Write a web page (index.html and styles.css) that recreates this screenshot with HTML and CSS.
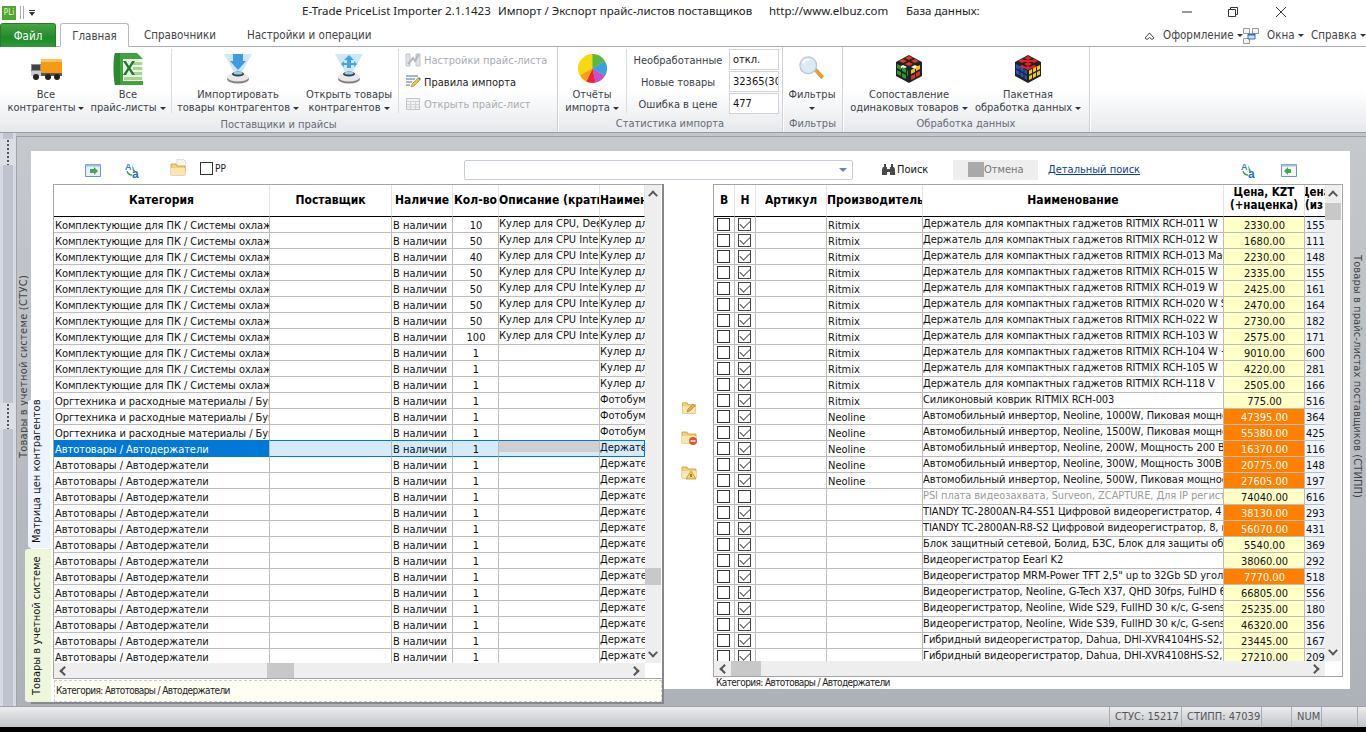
FILE: index.html
```html
<!DOCTYPE html>
<html lang="ru">
<head>
<meta charset="utf-8">
<title>E-Trade PriceList Importer</title>
<link rel="stylesheet" href="styles.css">
</head>
<body>
<svg class="defs" width="0" height="0">
  <symbol id="cube1" viewBox="0 0 28 30">
    <path d="M14 1 27 8v14L14 29 1 22V8z" fill="#222"/>
    <path d="M14 2l4 2-4 2-4-2zM8 5l4 2-4 2-4-2zM20 5l4 2-4 2-4-2zM14 8l4 2-4 2-4-2z" fill="#e23a2a"/>
    <path d="M8 11l4 2-4 2-4-2zM20 11l4 2-4 2-4-2z" fill="#f2f2f2"/>
    <path d="M2 10l4 2v4l-4-2zM7 13l4 2v4l-4-2zM2 16l4 2v4l-4-2zM7 19l4 2v4l-4-2zM12 16l1 1v5l-1-1z" fill="#2b9a35"/>
    <path d="M16 16l4-2v4l-4 2zM21 13l4-2v4l-4 2z" fill="#f0c020"/>
    <path d="M16 22l4-2v4l-4 2zM21 19l4-2v4l-4 2z" fill="#d73426"/>
  </symbol>
  <symbol id="cube2" viewBox="0 0 28 30">
    <path d="M14 1 27 8v14L14 29 1 22V8z" fill="#222"/>
    <path d="M14 2l4 2-4 2-4-2zM8 5l4 2-4 2-4-2zM20 5l4 2-4 2-4-2zM14 8l4 2-4 2-4-2zM8 11l4 2-4 2-4-2zM20 11l4 2-4 2-4-2zM14 5l4 2-4 2-4-2zM14 12l4 2-4 2-4-2z" fill="#e3222a"/>
    <path d="M2 10l3.500 2v4L2 14zM6.500 12.500l3 2v4l-3-2zM10.500 15l2.500 1.500v4L10.500 19zM2 15.500l3.500 2v4L2 19.500zM6.500 18l3 2v4l-3-2zM10.500 20.500l2.500 1.500v4l-2.500-1.500z" fill="#1c55c8"/>
    <path d="M15 16.500l3-1.500v4l-3 1.500zM19 14.500l3-1.500v4l-3 1.500zM23 12.500l3-1.500v4l-3 1.500zM15 22l3-1.500v4L15 26zM19 20l3-1.500v4L19 24zM23 18l3-1.500v4L23 22z" fill="#f3c914"/>
  </symbol>
  <symbol id="drive" viewBox="0 0 30 30">
    <path d="M1 0h28L19 18h-8z" fill="#cfe8f8"/>
    <ellipse cx="15" cy="25" rx="11" ry="4.500" fill="#7f7f7f"/>
    <ellipse cx="15" cy="23" rx="11" ry="4.500" fill="#e8e8e8"/>
    <ellipse cx="15" cy="20" rx="6" ry="2.500" fill="#3d3d3d"/>
    <ellipse cx="15" cy="19" rx="4.500" ry="1.600" fill="#8fd2f5"/>
  </symbol>
  <symbol id="az" viewBox="0 0 16 16">
    <text x="0" y="8" class="az-a">A</text>
    <path d="M2 9c1 3 3 4 5 4" fill="none" stroke="#3aa655" stroke-width="1.500"/>
    <path d="M7 3l3 6-2 1z" fill="#4aa564"/>
    <text x="7" y="16" class="az-b">a</text>
  </symbol>
  <symbol id="folder" viewBox="0 0 16 16">
    <path d="M1 3h5l1 2h8v9H1z" fill="#f3cf7d" stroke="#c8983f" stroke-width=".8"/>
    <path d="M1 7h14v7H1z" fill="#fbe7ae"/>
  </symbol>
</svg>

<header class="titlebar">
  <span class="pli">PLi</span>
  <span class="tsep"></span><span class="tsep"></span>
  <span class="qa"></span>
  <span class="title"><span class="tt1">E-Trade PriceList Importer 2.1.1423</span><span class="tt2">Импорт / Экспорт прайс-листов поставщиков</span><span class="tt3">http://www.elbuz.com</span><span>База данных:</span></span>
  <span class="winbtn"><svg width="12" height="12" viewBox="0 0 12 12"><path d="M1 6h10" stroke="#333"/></svg></span>
  <span class="winbtn"><svg width="12" height="12" viewBox="0 0 12 12"><path d="M1.500 3.500h7v7h-7zM3.500 3.500v-2h7v7h-2" fill="none" stroke="#333"/></svg></span>
  <span class="winbtn last"><svg width="12" height="12" viewBox="0 0 12 12"><path d="M1 1l10 10M11 1 1 11" stroke="#333"/></svg></span>
</header>

<nav class="tabs">
  <span class="tab-file">Файл</span>
  <span class="tab active">Главная</span>
  <span class="tab">Справочники</span>
  <span class="tab">Настройки и операции</span>
  <span class="tabs-right">
    <svg class="collapse" width="13" height="10" viewBox="0 0 13 10"><path d="M2 7l4.500-5L11 7l-2 1.500-2.500-2-2.500 2z" fill="none" stroke="#444"/></svg>
    <span class="menu me1">Оформление<i class="car"></i></span>
    <svg class="winico" width="16" height="16" viewBox="0 0 16 16"><path d="M.5 .5h6v5h-6zM9.500 .5h6v5h-6zM.5 10.500h6v5h-6z" fill="#f4f4f4" stroke="#999"/><path d="M5 6h7v5H5z" fill="#cfe3f6" stroke="#2c6fc0"/><path d="M5 6h7v1.500H5z" fill="#2c6fc0"/></svg>
    <span class="menu me2">Окна<i class="car"></i></span>
    <span class="menu me3">Справка<i class="car"></i></span>
  </span>
</nav>

<section class="ribbon">
  <div class="group g-suppliers">
    <div class="gbody">
      <div class="rb w84">
        <span class="ric"><svg width="34" height="26" viewBox="0 0 34 26"><path d="M12 3h21v14H12z" fill="#f59a12"/><path d="M12 3h21v3H12z" fill="#fdc35a"/><path d="M2 8h10v12H2z" fill="#8a8d90"/><path d="M3 9h8v5H3z" fill="#3f4347"/><path d="M2 15h10v5H2z" fill="#c9cccf"/><path d="M12 17h21v3H12z" fill="#55585b"/><circle cx="7" cy="21" r="3" fill="#222"/><circle cx="19" cy="21" r="3" fill="#222"/><circle cx="28" cy="21" r="3" fill="#222"/></svg></span>
        <span>Все</span><span>контрагенты<i class="car"></i></span>
      </div>
      <div class="rb w80">
        <span class="ric"><svg width="32" height="34" viewBox="0 0 32 34"><path d="M3 1h22l6 6v26H3z" fill="#3fa43f"/><path d="M3 1c-2 3-2 26 0 32h5V1z" fill="#2e8a2e"/><path d="M11 7h20v22H11z" fill="#eef6e6"/><path d="M21 10h9v3h-9zM21 15h9v3h-9zM21 20h9v3h-9zM12 25h18v3H12z" fill="#a5d58e"/><path d="M11 9l3-0 3 5 3-5h3l-4.500 7L23 23h-3l-3-5-3 5h-3l4.500-7z" fill="#1f7a2b"/></svg></span>
        <span>Все</span><span>прайс-листы<i class="car"></i></span>
      </div>
      <span class="isep s1"></span>
      <div class="rb w132">
        <span class="ric"><svg width="30" height="30" viewBox="0 0 30 30"><use href="#drive"/><path d="M10 0h10v7h3l-8 9-8-9h3z" fill="#3f9be0"/></svg></span>
        <span>Импортировать</span><span>товары контрагентов<i class="car"></i></span>
      </div>
      <div class="rb w90">
        <span class="ric"><svg width="30" height="30" viewBox="0 0 30 30"><use href="#drive"/><path d="M15 1l5 5h-3v3h3v-2l3 3-3 3v-2h-3v3h-4v-3H10v2l-3-3 3-3v2h3V6h-3z" fill="#45a5e0"/></svg></span>
        <span>Открыть товары</span><span>контрагентов<i class="car"></i></span>
      </div>
      <span class="isep s2"></span>
      <div class="smalls">
        <div class="sb dis"><svg width="16" height="16" viewBox="0 0 16 16"><path d="M1 2h4v12H1zM11 2h4v12h-4z" fill="#e1e4e8" stroke="#c3c7cc"/><path d="M3 12 8 6l2 3 4-7" fill="none" stroke="#b5b8bd" stroke-width="2"/></svg>Настройки прайс-листа</div>
        <div class="sb"><svg width="16" height="16" viewBox="0 0 16 16"><path d="M1 2h12M1 5h9M1 8h6M1 11h4" stroke="#3c70b0"/><path d="M6 13l1-3 6-6 2 2-6 6z" fill="#f0c13c" stroke="#a8802a" stroke-width=".6"/><path d="M13 4l2 2 1-1-2-2z" fill="#4a86c8"/></svg>Правила импорта</div>
        <div class="sb dis"><svg width="16" height="16" viewBox="0 0 16 16"><path d="M1.500 2.500h13v11h-13z" fill="#f2f3f5" stroke="#c0c4c9"/><path d="M1.500 5.500h13M1.500 8.500h13M1.500 11h13M5.500 5.500v8M10.500 5.500v8" stroke="#cfd2d6"/></svg>Открыть прайс-лист</div>
      </div>
    </div>
    <div class="gtitle">Поставщики и прайсы</div>
  </div>

  <div class="group g-stats">
    <div class="gbody">
      <div class="rb w68">
        <span class="ric"><svg width="29" height="29" viewBox="0 0 28 28"><circle cx="14" cy="14" r="14" fill="#f6d90e"/><path d="M14 14V0a14 14 0 0 1 12 7z" fill="#57b848"/><path d="M14 14l12-7a14 14 0 0 1 0 14z" fill="#3aa0e4"/><path d="M14 14l12 7a14 14 0 0 1-9 6.600z" fill="#c74fd8"/><path d="M14 14l3 13.600a14 14 0 0 1-9-1z" fill="#e8244a"/><path d="M14 14 8 26.600a14 14 0 0 1-6-6z" fill="#f7a10f"/></svg></span>
        <span>Отчёты</span><span>импорта<i class="car"></i></span>
      </div>
      <span class="isep s3"></span>
      <div class="stat">
        <div class="statrow"><label>Необработанные</label><span class="inp">откл.</span></div>
        <div class="statrow"><label>Новые товары</label><span class="inp">32365(30</span></div>
        <div class="statrow"><label>Ошибка в цене</label><span class="inp">477</span></div>
      </div>
    </div>
    <div class="gtitle">Статистика импорта</div>
  </div>

  <div class="group g-filter">
    <div class="gbody">
      <div class="rb w58">
        <span class="ric"><svg width="26" height="25" viewBox="0 0 28 27"><path d="M16 16l3-3 8 9-3 3z" fill="#ec9a35"/><circle cx="10" cy="10" r="9" fill="#d6edf9" stroke="#bcc6cc" stroke-width="1.500"/><path d="M4 8a6 6 0 0 1 7-4" fill="none" stroke="#fff" stroke-width="2"/></svg></span>
        <span>Фильтры</span><span><i class="car solo"></i></span>
      </div>
    </div>
    <div class="gtitle">Фильтры</div>
  </div>

  <div class="group g-proc">
    <div class="gbody">
      <div class="rb w126">
        <span class="ric"><svg width="28" height="30"><use href="#cube1"/></svg></span>
        <span>Сопоставление</span><span>одинаковых товаров<i class="car"></i></span>
      </div>
      <div class="rb w112">
        <span class="ric"><svg width="28" height="30"><use href="#cube2"/></svg></span>
        <span>Пакетная</span><span>обработка данных<i class="car"></i></span>
      </div>
    </div>
    <div class="gtitle">Обработка данных</div>
  </div>
  <div class="ribbon-rest"></div>
</section>

<main class="main">
  <aside class="strip"><span class="grip"></span><span class="grip g2"></span></aside>
  <div class="content">
    <div class="vlabel left"><span>Товары в учетной системе (СТУС)</span></div>
    <div class="panel">
      <div class="toolbar">
        <div class="tl">
          <svg class="t1" width="16" height="16" viewBox="0 0 16 16"><path d="M.5 2.500h15v12H.5z" fill="#e6f0fa" stroke="#6d95c2"/><path d="M.5 2.500h15v2H.5z" fill="#9dc0e4"/><path d="M5 7h4V5l4 4-4 4v-2H5z" fill="#49a54d"/></svg>
          <svg class="t2" width="16" height="16"><use href="#az"/></svg>
          <svg class="t3" width="16" height="18" viewBox="0 0 16 18"><path d="M7 0h6l3 3v9H7z" fill="#f4f4f4" stroke="#c9c9c9" stroke-width=".7"/><use href="#folder" y="2" width="16" height="16"/></svg>
          <i class="cb pp"></i><span class="pptext">PP</span>
        </div>
        <div class="combo"><i class="combo-arrow"></i></div>
        <div class="search"><svg width="13" height="11" viewBox="0 0 13 11"><path d="M1 3h4v8H0V5zM8 3h4l1 2v6H8zM5 5h3v3H5zM2 0h2v3H2zM9 0h2v3H9z" fill="#4a4a4a"/></svg>Поиск</div>
        <div class="cancel"><i class="gray-sq"></i>Отмена</div>
        <a class="detail">Детальный поиск</a>
        <div class="tr">
          <svg width="16" height="16"><use href="#az"/></svg>
          <svg width="16" height="16" viewBox="0 0 16 16"><path d="M.5 2.500h15v12H.5z" fill="#f4f8fc" stroke="#6d95c2"/><path d="M.5 2.500h15v2H.5z" fill="#9dc0e4"/><path d="M10 7H7V5L3 9l4 4v-2h3z" fill="#49a54d"/></svg>
        </div>
      </div>

      <div class="split">
        <section class="lpane">
          <div class="vtab vt1">Матрица цен контрагентов</div>
          <div class="vtab vt2">Товары в учетной системе</div>
          <div class="grid lgrid">
            <div class="gridtop">
              <div class="tw">
                <table class="tb ltb">
                  <colgroup><col class="c216"><col class="c122"><col class="c61"><col class="c46"><col class="c101"><col class="c45"></colgroup>
                  <thead><tr><th>Категория</th><th>Поставщик</th><th>Наличие</th><th>Кол-во</th><th class="lft">Описание (краткое)</th><th class="lft">Наименование</th></tr></thead>
                  <tbody>
<tr><td>Комплектующие для ПК / Системы охлаждения</td><td></td><td>В наличии</td><td>10</td><td>Кулер для CPU, Deepcool</td><td>Кулер для CPU</td></tr>
<tr><td>Комплектующие для ПК / Системы охлаждения</td><td></td><td>В наличии</td><td>50</td><td>Кулер для CPU Intel, AMD</td><td>Кулер для CPU</td></tr>
<tr><td>Комплектующие для ПК / Системы охлаждения</td><td></td><td>В наличии</td><td>40</td><td>Кулер для CPU Intel, AMD</td><td>Кулер для CPU</td></tr>
<tr><td>Комплектующие для ПК / Системы охлаждения</td><td></td><td>В наличии</td><td>50</td><td>Кулер для CPU Intel, AMD</td><td>Кулер для CPU</td></tr>
<tr><td>Комплектующие для ПК / Системы охлаждения</td><td></td><td>В наличии</td><td>50</td><td>Кулер для CPU Intel, AMD</td><td>Кулер для CPU</td></tr>
<tr><td>Комплектующие для ПК / Системы охлаждения</td><td></td><td>В наличии</td><td>50</td><td>Кулер для CPU Intel, AMD</td><td>Кулер для CPU</td></tr>
<tr><td>Комплектующие для ПК / Системы охлаждения</td><td></td><td>В наличии</td><td>50</td><td>Кулер для CPU Intel, AMD</td><td>Кулер для CPU</td></tr>
<tr><td>Комплектующие для ПК / Системы охлаждения</td><td></td><td>В наличии</td><td>100</td><td>Кулер для CPU Intel, AMD</td><td>Кулер для CPU</td></tr>
<tr><td>Комплектующие для ПК / Системы охлаждения</td><td></td><td>В наличии</td><td>1</td><td></td><td>Кулер для CPU</td></tr>
<tr><td>Комплектующие для ПК / Системы охлаждения</td><td></td><td>В наличии</td><td>1</td><td></td><td>Кулер для CPU</td></tr>
<tr><td>Комплектующие для ПК / Системы охлаждения</td><td></td><td>В наличии</td><td>1</td><td></td><td>Кулер для CPU</td></tr>
<tr><td>Оргтехника и расходные материалы / Бумага</td><td></td><td>В наличии</td><td>1</td><td></td><td>Фотобумага</td></tr>
<tr><td>Оргтехника и расходные материалы / Бумага</td><td></td><td>В наличии</td><td>1</td><td></td><td>Фотобумага</td></tr>
<tr class="presel"><td>Оргтехника и расходные материалы / Бумага</td><td></td><td>В наличии</td><td>1</td><td></td><td>Фотобумага</td></tr>
<tr class="sel"><td>Автотовары / Автодержатели</td><td></td><td>В наличии</td><td>1</td><td></td><td>Держатель</td></tr>
<tr><td>Автотовары / Автодержатели</td><td></td><td>В наличии</td><td>1</td><td></td><td>Держатель</td></tr>
<tr><td>Автотовары / Автодержатели</td><td></td><td>В наличии</td><td>1</td><td></td><td>Держатель</td></tr>
<tr><td>Автотовары / Автодержатели</td><td></td><td>В наличии</td><td>1</td><td></td><td>Держатель</td></tr>
<tr><td>Автотовары / Автодержатели</td><td></td><td>В наличии</td><td>1</td><td></td><td>Держатель</td></tr>
<tr><td>Автотовары / Автодержатели</td><td></td><td>В наличии</td><td>1</td><td></td><td>Держатель</td></tr>
<tr><td>Автотовары / Автодержатели</td><td></td><td>В наличии</td><td>1</td><td></td><td>Держатель</td></tr>
<tr><td>Автотовары / Автодержатели</td><td></td><td>В наличии</td><td>1</td><td></td><td>Держатель</td></tr>
<tr><td>Автотовары / Автодержатели</td><td></td><td>В наличии</td><td>1</td><td></td><td>Держатель</td></tr>
<tr><td>Автотовары / Автодержатели</td><td></td><td>В наличии</td><td>1</td><td></td><td>Держатель</td></tr>
<tr><td>Автотовары / Автодержатели</td><td></td><td>В наличии</td><td>1</td><td></td><td>Держатель</td></tr>
<tr><td>Автотовары / Автодержатели</td><td></td><td>В наличии</td><td>1</td><td></td><td>Держатель</td></tr>
<tr><td>Автотовары / Автодержатели</td><td></td><td>В наличии</td><td>1</td><td></td><td>Держатель</td></tr>
<tr><td>Автотовары / Автодержатели</td><td></td><td>В наличии</td><td>1</td><td></td><td>Держатель</td></tr>
                  </tbody>
                </table>
              </div>
              <div class="vs vs-l"><i class="ch up"></i><i class="thumb"></i><i class="ch dn"></i></div>
            </div>
            <div class="hs hs-l"><i class="ch lf"></i><i class="thumb"></i><i class="ch rt"></i></div>
          </div>
          <div class="lfoot"><span>Категория: Автотовары / Автодержатели</span></div>
        </section>

        <section class="rpane">
          <div class="midicons">
            <svg class="mi1" width="16" height="15"><use href="#folder"/><path d="M6 12l1-3 5-5 2 2-5 5z" fill="#d9b14f" stroke="#a8802a" stroke-width=".6"/></svg>
            <svg class="mi2" width="16" height="16"><use href="#folder"/><circle cx="12" cy="12" r="4" fill="#e2552a"/><path d="M9.500 12h5" stroke="#fff" stroke-width="1.500"/></svg>
            <svg class="mi3" width="16" height="16"><use href="#folder"/><path d="M10 7l5 8H5z" fill="#f6d25a" stroke="#b38a20" stroke-width=".7"/><path d="M10 10v3" stroke="#333"/></svg>
          </div>
          <div class="rcol">
            <div class="grid rgrid">
              <div class="gridtop">
                <div class="tw">
                  <table class="tb rtb">
                    <colgroup><col class="c21"><col class="c21"><col class="c71"><col class="c96"><col class="c301"><col class="c81"><col class="c20"></colgroup>
                    <thead><tr><th>В</th><th>Н</th><th>Артикул</th><th class="lft">Производитель</th><th>Наименование</th><th class="two">Цена, KZT<br>(+наценка)</th><th class="two lft clipl">Цена<br>(из прайса)</th></tr></thead>
                    <tbody>
<tr><td><i class="cb"></i></td><td><i class="cb on"></i></td><td></td><td>Ritmix</td><td>Держатель для компактных гаджетов RITMIX RCH-011 W</td><td>2330.00</td><td>1550</td></tr>
<tr><td><i class="cb"></i></td><td><i class="cb on"></i></td><td></td><td>Ritmix</td><td>Держатель для компактных гаджетов RITMIX RCH-012 W</td><td>1680.00</td><td>1110</td></tr>
<tr><td><i class="cb"></i></td><td><i class="cb on"></i></td><td></td><td>Ritmix</td><td>Держатель для компактных гаджетов RITMIX RCH-013 Magnet</td><td>2230.00</td><td>1480</td></tr>
<tr><td><i class="cb"></i></td><td><i class="cb on"></i></td><td></td><td>Ritmix</td><td>Держатель для компактных гаджетов RITMIX RCH-015 W</td><td>2335.00</td><td>1550</td></tr>
<tr><td><i class="cb"></i></td><td><i class="cb on"></i></td><td></td><td>Ritmix</td><td>Держатель для компактных гаджетов RITMIX RCH-019 W</td><td>2425.00</td><td>1610</td></tr>
<tr><td><i class="cb"></i></td><td><i class="cb on"></i></td><td></td><td>Ritmix</td><td>Держатель для компактных гаджетов RITMIX RCH-020 W Sucker</td><td>2470.00</td><td>1640</td></tr>
<tr><td><i class="cb"></i></td><td><i class="cb on"></i></td><td></td><td>Ritmix</td><td>Держатель для компактных гаджетов RITMIX RCH-022 W</td><td>2730.00</td><td>1820</td></tr>
<tr><td><i class="cb"></i></td><td><i class="cb on"></i></td><td></td><td>Ritmix</td><td>Держатель для компактных гаджетов RITMIX RCH-103 W</td><td>2575.00</td><td>1710</td></tr>
<tr><td><i class="cb"></i></td><td><i class="cb on"></i></td><td></td><td>Ritmix</td><td>Держатель для компактных гаджетов RITMIX RCH-104 W + кабель</td><td>9010.00</td><td>6000</td></tr>
<tr><td><i class="cb"></i></td><td><i class="cb on"></i></td><td></td><td>Ritmix</td><td>Держатель для компактных гаджетов RITMIX RCH-105 W</td><td>4220.00</td><td>2810</td></tr>
<tr><td><i class="cb"></i></td><td><i class="cb on"></i></td><td></td><td>Ritmix</td><td>Держатель для компактных гаджетов RITMIX RCH-118 V</td><td>2505.00</td><td>1660</td></tr>
<tr><td><i class="cb"></i></td><td><i class="cb on"></i></td><td></td><td>Ritmix</td><td>Силиконовый коврик RITMIX RCH-003</td><td>775.00</td><td>516</td></tr>
<tr><td><i class="cb"></i></td><td><i class="cb on"></i></td><td></td><td>Neoline</td><td>Автомобильный инвертор, Neoline, 1000W, Пиковая мощность</td><td class="hot">47395.00</td><td>3640</td></tr>
<tr><td><i class="cb"></i></td><td><i class="cb on"></i></td><td></td><td>Neoline</td><td>Автомобильный инвертор, Neoline, 1500W, Пиковая мощность</td><td class="hot">55380.00</td><td>4250</td></tr>
<tr><td><i class="cb"></i></td><td><i class="cb on"></i></td><td></td><td>Neoline</td><td>Автомобильный инвертор, Neoline, 200W, Мощность 200 Вт</td><td class="hot">16370.00</td><td>1160</td></tr>
<tr><td><i class="cb"></i></td><td><i class="cb on"></i></td><td></td><td>Neoline</td><td>Автомобильный инвертор, Neoline, 300W, Мощность 300Вт</td><td class="hot">20775.00</td><td>1480</td></tr>
<tr><td><i class="cb"></i></td><td><i class="cb on"></i></td><td></td><td>Neoline</td><td>Автомобильный инвертор, Neoline, 500W, Пиковая мощность</td><td class="hot">27605.00</td><td>1970</td></tr>
<tr class="mute"><td><i class="cb"></i></td><td><i class="cb"></i></td><td></td><td></td><td>PSI плата видеозахвата, Surveon, ZCAPTURE, Для IP регистраторов</td><td>74040.00</td><td>6160</td></tr>
<tr><td><i class="cb"></i></td><td><i class="cb on"></i></td><td></td><td></td><td>TIANDY TC-2800AN-R4-S51 Цифровой видеорегистратор, 4 канала</td><td class="hot">38130.00</td><td>2930</td></tr>
<tr><td><i class="cb"></i></td><td><i class="cb on"></i></td><td></td><td></td><td>TIANDY TC-2800AN-R8-S2 Цифровой видеорегистратор, 8, канала</td><td class="hot">56070.00</td><td>4310</td></tr>
<tr><td><i class="cb"></i></td><td><i class="cb on"></i></td><td></td><td></td><td>Блок защитный сетевой, Болид, БЗС, Блок для защиты оборудования</td><td>5540.00</td><td>3690</td></tr>
<tr><td><i class="cb"></i></td><td><i class="cb on"></i></td><td></td><td></td><td>Видеорегистратор Eearl K2</td><td>38060.00</td><td>2920</td></tr>
<tr><td><i class="cb"></i></td><td><i class="cb on"></i></td><td></td><td></td><td>Видеорегистратор MRM-Power TFT 2,5" up to 32Gb SD угол обзора</td><td class="hot">7770.00</td><td>5180</td></tr>
<tr><td><i class="cb"></i></td><td><i class="cb on"></i></td><td></td><td></td><td>Видеорегистратор, Neoline, G-Tech X37, QHD 30fps, FulHD 60fps</td><td>66805.00</td><td>5560</td></tr>
<tr><td><i class="cb"></i></td><td><i class="cb on"></i></td><td></td><td></td><td>Видеорегистратор, Neoline, Wide S29, FullHD 30 к/с, G-sensor</td><td>25235.00</td><td>1800</td></tr>
<tr><td><i class="cb"></i></td><td><i class="cb on"></i></td><td></td><td></td><td>Видеорегистратор, Neoline, Wide S39, FullHD 30 к/с, G-sensor</td><td>46320.00</td><td>3560</td></tr>
<tr><td><i class="cb"></i></td><td><i class="cb on"></i></td><td></td><td></td><td>Гибридный видеорегистратор, Dahua, DHI-XVR4104HS-S2, 4 канала</td><td>23445.00</td><td>1670</td></tr>
<tr><td><i class="cb"></i></td><td><i class="cb on"></i></td><td></td><td></td><td>Гибридный видеорегистратор, Dahua, DHI-XVR4108HS-S2, 8 каналов</td><td>27210.00</td><td>2090</td></tr>
                    </tbody>
                  </table>
                </div>
                <div class="vs vs-r"><i class="ch up"></i><i class="thumb"></i><i class="ch dn"></i></div>
              </div>
              <div class="hs hs-r"><i class="ch lf"></i><i class="thumb"></i><i class="ch rt"></i></div>
            </div>
            <div class="rfoot">Категория: Автотовары / Автодержатели</div>
          </div>
        </section>
      </div>
    </div>
    <div class="vlabel right"><span>Товары в прайс-листах поставщиков (СТИПП)</span></div>
  </div>
</main>

<footer class="status">
  <span class="sg a">СТУС: 15217</span>
  <span class="sg b">СТИПП: 47039</span>
  <span class="sg c"></span>
  <span class="sg d">NUM</span>
  <span class="sg e"></span>
  <span class="sg f"></span>
</footer>
<div class="blackbar"></div>
</body>
</html>
```

FILE: styles.css
```css
* { box-sizing: border-box; }
html, body { margin: 0; padding: 0; }
body {
  width: 1366px; height: 732px; overflow: hidden;
  background: #fff; color: #000;
  font: 11px/13px "DejaVu Sans Condensed", "DejaVu Sans", sans-serif;
  display: flex; flex-direction: column;
}
.defs { position: absolute; }
i { display: block; }
.az-a { font: bold 9px "Liberation Sans", sans-serif; fill: #3b82c4; }
.az-b { font: bold 12px "Liberation Sans", sans-serif; fill: #2a6fb8; }

/* title bar */
.titlebar { height: 22px; display: flex; align-items: center; padding: 3px 0 0 2px; background: #fff; flex: none; }
.pli { width: 14px; height: 14px; background: #4ea72e; color: #eaffd8; font-size: 8px; line-height: 14px; text-align: center; overflow: hidden; }
.tsep { width: 1px; height: 13px; background: #aaa; margin-left: 4px; }
.tsep + .tsep { margin-left: 2px; }
.qa { width: 6px; height: 6px; margin-left: 5px; border-top: 1px solid #333; position: relative; }
.qa::after { content: ""; display: block; margin-top: 1px; border: 3px solid transparent; border-top: 4px solid #333; border-bottom: 0; }
.title { margin: -4px 0 0 267px; width: 862px; display: flex; font: 11.5px/14px "Noto Sans", sans-serif; color: #222; white-space: nowrap; }
.tt1 { width: 196px; } .tt2 { width: 271px; } .tt3 { width: 137px; }
.winbtn { width: 46px; display: flex; justify-content: center; margin-top: -1px; }
.winbtn.last { width: 50px; }

/* tabs */
.tabs { height: 25px; flex: none; display: flex; align-items: flex-end; border-bottom: 1px solid #a9aeb3; background: #fff; font-size: 11.5px; color: #444; }
.tab-file { width: 56px; height: 24px; margin-bottom: -1px; line-height: 24px; text-align: center; color: #fff; font-weight: 500; background: linear-gradient(#4aa347, #1f8a28 60%, #2f9c37); border-radius: 3px 3px 0 0; border: 1px solid #2d7a2e; border-bottom: 0; }
.tab { height: 23px; line-height: 24px; padding: 0 13px; margin-left: 2px; }
.tab + .tab + .tab { margin-left: 5px; }
.tab.active { width: 69px; height: 24px; margin: 0 0 -1px 4px; padding: 0; text-align: center; background: #fff; border: 1px solid #b5babf; border-bottom: 1px solid #fff; border-radius: 3px 3px 0 0; }
.tabs-right { margin-left: auto; display: flex; align-items: center; height: 23px; padding-top: 2px; }
.collapse { margin-right: 7px; }
.menu { display: flex; align-items: center; color: #444; }
.me1 { width: 80px; } .me2 { width: 44px; margin-left: 4px; } .me3 { width: 55px; }
.winico { margin-right: 4px; }
.car { display: inline-block; width: 0; height: 0; margin-left: 3px; border: 3px solid transparent; border-top: 3px solid #333; border-bottom: 0; vertical-align: middle; }
.car.solo { margin: 0; }

/* ribbon */
.ribbon { height: 86px; flex: none; display: flex; border-bottom: 1px solid #969ca3; background: linear-gradient(#fff 50%, #e6e9ec); color: #3a3f47; }
.group { display: flex; flex-direction: column; border-right: 1px solid #cfd3d8; box-shadow: 1px 0 0 #fff; flex: none; }
.g-suppliers { width: 558px; } .g-stats { width: 225px; } .g-filter { width: 60px; } .g-proc { width: 247px; }
.gbody { flex: 1; display: flex; padding-top: 2px; }
.gtitle { height: 18px; line-height: 19px; text-align: center; color: #666b75; flex: none; }
.rb { display: flex; flex-direction: column; align-items: center; white-space: nowrap; flex: none; }
.ric { height: 39px; display: flex; align-items: center; justify-content: center; }
.w84 { width: 84px; margin-left: 4px; } .w80 { width: 80px; } .w132 { width: 132px; } .w90 { width: 90px; } .w68 { width: 68px; } .w58 { width: 58px; }
.w126 { width: 126px; margin-left: 3px; } .w112 { width: 112px; }
.isep { width: 1px; height: 64px; background: #dadde1; flex: none; }
.s1 { margin-left: 3px; } .s2 { margin-left: 4px; }
.smalls { margin-left: 6px; display: flex; flex-direction: column; }
.sb { height: 22px; display: flex; align-items: center; gap: 3px; white-space: nowrap; color: #222; }
.sb.dis { color: #a9adb3; }
.stat { display: flex; flex-direction: column; gap: 1px; }
.statrow { display: flex; height: 21px; align-items: center; }
.statrow label { width: 102px; text-align: center; padding-top: 1px; }
.inp { width: 50px; height: 21px; border: 1px solid #d2d4d8; background: #fff; color: #111; line-height: 19px; padding-left: 3px; overflow: hidden; white-space: nowrap; }
.ribbon-rest { flex: 1; }

/* main */
.main { height: 573px; flex: none; display: flex; background: #c3c7cb; }
.strip { width: 16px; flex: none; background: linear-gradient(90deg, #d8dae3 3px, #bfc3cd 3px, #bfc3cd 13px, #d8dae3 13px); position: relative; }
.grip { display: block; height: 26px; margin-top: 6px; background: #dcdee6 radial-gradient(circle, #555 1px, transparent 1.2px) center top / 4px 4px repeat-y; }
.g2 { margin-top: 238px; }
.content { flex: 1; margin-top: 3px; border-top: 1px solid #9b9fa4; border-left: 1px solid #a0a4a8; padding-top: 14px; display: flex; background: linear-gradient(#c5c9cd, #adb2b9); min-width: 0; }
.vlabel { width: 14px; flex: none; font-size: 11px; color: #444; white-space: nowrap; }
.vlabel span { display: block; writing-mode: vertical-rl; }
.vlabel.left span { transform: rotate(180deg); margin-top: 124px; letter-spacing: .25px; }
.vlabel.right { width: 16px; }
.vlabel.right span { margin-top: 104px; margin-left: 1px; letter-spacing: .1px; }
.panel { width: 1319px; flex: none; display: flex; flex-direction: column; }

/* toolbar */
.toolbar { height: 33px; flex: none; background: #fff; display: flex; align-items: center; padding-top: 4px; font-size: 11px; }
.tl { width: 433px; flex: none; display: flex; align-items: center; padding-left: 54px; }
.t2 { margin-left: 24px; } .t3 { margin-left: 29px; margin-top: -3px; }
.cb { width: 13px; height: 13px; border: 1px solid #333; background: #fff; position: relative; flex: none; }
.cb.pp { margin: -3px 0 0 14px; }
.pptext { margin: -3px 0 0 2px; font-size: 10px; color: #222; }
.combo { width: 389px; height: 20px; border: 1px solid #c4cdd8; border-radius: 2px; display: flex; align-items: center; justify-content: flex-end; padding-right: 5px; flex: none; background: #fff; }
.combo-arrow { border: 4px solid transparent; border-top: 4px solid #6b85a8; border-bottom: 0; }
.search { width: 71px; margin-left: 29px; display: flex; align-items: center; gap: 2px; color: #111; flex: none; }
.cancel { width: 85px; height: 20px; background: #eee; display: flex; align-items: center; padding-left: 15px; color: #777; flex: none; }
.gray-sq { width: 16px; height: 15px; background: #a9a9a9; }
.detail { margin-left: 10px; color: #0a3f98; text-decoration: underline; white-space: nowrap; }
.tr { margin-left: auto; padding-right: 53px; display: flex; gap: 24px; }

/* split */
.split { flex: 1; display: flex; align-items: flex-start; min-height: 0; }
.lpane { width: 633px; height: 520px; flex: none; position: relative; background: #fff; padding-left: 22px; border-right: 2px solid #85888c; border-bottom: 2px solid #85888c; display: flex; flex-direction: column; }
.vtab { position: absolute; writing-mode: vertical-rl; transform: rotate(180deg); text-align: left; color: #111; white-space: nowrap; }
.vt1 { left: -3px; top: 216px; width: 22px; height: 148px; background: #eef4fb; padding: 5px 2px 0 0; line-height: 14px; border-radius: 0 3px 3px 0; }
.vt2 { left: -6px; top: 365px; width: 26px; height: 153px; background: #eef7dc; padding: 7px 5px 0 0; line-height: 14px; border-radius: 0 3px 3px 0; }

/* grid */
.grid { border: 1px solid #a4a4a4; flex: none; background: #fff; }
.lgrid { width: 609px; height: 495px; border-right: 0; }
.rgrid { width: 630px; height: 493px; padding-right: 1px; }
.gridtop { display: flex; }
.lgrid .gridtop { height: 478px; }
.rgrid .gridtop { height: 476px; }
.tw { overflow: hidden; flex: none; }
.lgrid .tw { width: 591px; }
.rgrid .tw { width: 611px; }
.tb { table-layout: fixed; border-collapse: separate; border-spacing: 0; width: 100%; }
.c216 { width: 216px; } .c122 { width: 122px; } .c61 { width: 61px; } .c46 { width: 46px; } .c101 { width: 101px; } .c45 { width: 45px; }
.c21 { width: 21px; } .c71 { width: 71px; } .c96 { width: 96px; } .c301 { width: 301px; } .c81 { width: 81px; } .c20 { width: 20px; }
.tb th { height: 32px; padding: 0; font-size: 12px; line-height: 15px; font-weight: bold; color: #000; text-align: center; border-right: 1px solid #e4e4e4; border-bottom: 1px solid #000; overflow: hidden; white-space: nowrap; }
.tb th.lft { text-align: left; }
.tb th.two { font-size: 11.5px; line-height: 13px; padding-bottom: 3px; }
.tb th.clipl { text-indent: -5px; border-right: 0; }
.tb td { height: 16px; padding: 3px 0 0 1px; line-height: 12px; color: #111; border-right: 1px solid #bcbcbc; border-bottom: 1px solid #bcbcbc; overflow: hidden; white-space: nowrap; }
.ltb td:nth-child(1) { letter-spacing: -.06px; }
.ltb td:nth-child(4) { text-align: center; }
.ltb td:nth-child(5) { padding: 0; vertical-align: top; line-height: 14px; }
.ltb td:nth-child(6) { padding: 0; vertical-align: top; line-height: 14px; border-right: 0; }
.ltb tr.presel td { border-bottom-color: #0078d7; }
.ltb tr.sel td { background: #d5ebfb; border-bottom: 1px solid #0078d7; }
.ltb tr.sel td:first-child { background: #0078d7; color: #fff; }
.ltb tr.sel td:nth-child(5) { background: linear-gradient(#cfcfcf 11px, #d5ebfb 11px); }
.ltb tr.sel td:last-child { border-right: 1px solid #0078d7; }
.rtb td:nth-child(1), .rtb td:nth-child(2) { padding: 0 0 0 3px; }
.rtb td:nth-child(5) { vertical-align: top; line-height: 13px; padding: 0; letter-spacing: -.08px; }
.rtb td:nth-child(6) { text-align: center; background: #ffffc8; }
.rtb td:nth-child(7) { background: #eef5fb; border-right: 0; }
.rtb td.hot { background: #ff8000; color: #fff; }
.rtb tr.mute td:nth-child(5) { color: #9a9a9a; }
.cb.on::after { content: ""; display: block; width: 9px; height: 5px; margin: 1px 0 0 1px; border-left: 1px solid #555; border-bottom: 1px solid #555; transform: rotate(-45deg); }
.cb.on { border-color: #444; }

/* scrollbars */
.vs { width: 16px; flex: none; background: #eee; display: flex; flex-direction: column; align-items: stretch; }
.hs { height: 15px; background: #eee; display: flex; align-items: stretch; }
.lgrid .hs { width: 591px; } .rgrid .hs { width: 611px; }
.ch { position: relative; flex: none; }
.vs .ch { height: 18px; } .hs .ch { width: 18px; }
.ch::after { content: ""; position: absolute; left: 50%; top: 50%; width: 5px; height: 5px; border-left: 2px solid #555; border-top: 2px solid #555; }
.ch.up::after { transform: translate(-50%, -30%) rotate(45deg); }
.ch.dn::after { transform: translate(-50%, -70%) rotate(225deg); }
.ch.lf::after { transform: translate(-30%, -50%) rotate(-45deg); }
.ch.rt::after { transform: translate(-70%, -50%) rotate(135deg); }
.thumb { background: #c8c8c8; flex: none; }
.vs .thumb { height: 17px; }
.vs-l .thumb { margin-top: 365px; }
.vs-l .dn, .vs-r .dn { margin-top: auto; }
.hs .rt { margin: 0 0 0 auto; }
.vs-r .thumb { margin-top: 0; }
.hs-l .thumb { width: 27px; margin-left: 195px; }
.hs-r .thumb { width: 30px; margin-left: -1px; }

.lfoot { margin-top: 1px; margin-left: 1px; width: 608px; height: 22px; background: #fffef2; border: 1px dashed #cfcfcf; padding-left: 1px; font-size: 10px; line-height: 20px; color: #222; letter-spacing: -.62px; }

.rpane { width: 686px; height: 505px; flex: none; background: #fff; display: flex; }
.midicons { width: 49px; flex: none; padding: 216px 0 0 17px; display: flex; flex-direction: column; }
.mi2 { margin-top: 14px; } .mi3 { margin-top: 19px; }
.rcol { width: 630px; flex: none; }
.rfoot { padding: 0 0 0 3px; font-size: 10px; line-height: 11px; color: #222; letter-spacing: -.62px; }

/* status */
.status { height: 21px; flex: none; display: flex; padding-left: 1109px; background: linear-gradient(#ebecee, #c2c5c9); color: #555; border-top: 1px solid #9da1a6; }
.sg { border-left: 1px solid #a9adb1; line-height: 20px; padding-left: 5px; flex: none; white-space: nowrap; }
.a { width: 72px; } .b { width: 80px; } .c { width: 30px; } .d { width: 30px; } .e { width: 36px; } .f { width: 9px; }
.blackbar { height: 5px; background: #000; flex: none; }
```
